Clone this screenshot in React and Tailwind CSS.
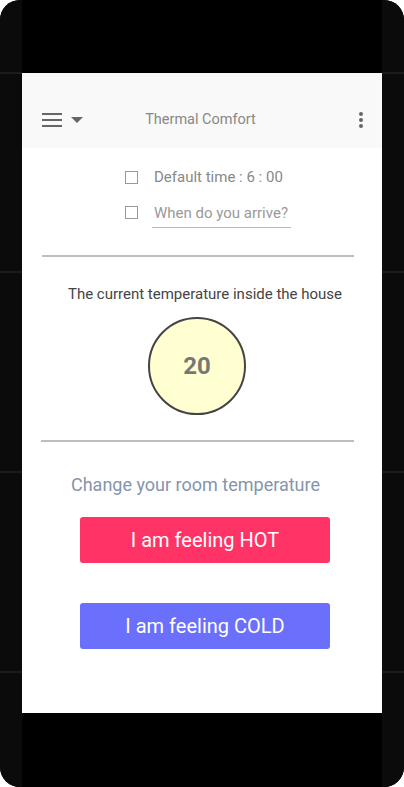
import React from 'react';

function SideRail() {
  // phone bezel column with faint seams
  return (
    <div className="w-[22px] flex flex-col bg-[#0b0b0b]">
      <div className="h-[72px]" />
      <div className="h-[2px] bg-[#1b1b1b]" />
      <div className="h-[197px]" />
      <div className="h-[2px] bg-[#1b1b1b]" />
      <div className="h-[198px]" />
      <div className="h-[2px] bg-[#1b1b1b]" />
      <div className="h-[198px]" />
      <div className="h-[2px] bg-[#1b1b1b]" />
      <div className="flex-1" />
    </div>
  );
}

export default function App() {
  return (
    <div className="w-[404px] h-[787px] bg-white font-['Roboto',sans-serif]">
      <div className="w-[404px] h-[787px] rounded-[20px] overflow-hidden flex bg-black">
        <SideRail />

        <div className="w-[360px] flex flex-col">
          <div className="h-[73px] bg-black" />

          <div className="h-[640px] bg-white flex flex-col">
            {/* Header */}
            <div className="h-[75px] bg-[#f9f9f9] flex items-center pl-[20px] pr-[19px] pt-[18px]">
              <div className="flex items-center gap-[9px] w-[62px]">
                <div className="flex flex-col gap-[4px] w-[20px]">
                  <div className="h-[2px] bg-[#666]" />
                  <div className="h-[2px] bg-[#666]" />
                  <div className="h-[2px] bg-[#666]" />
                </div>
                <svg width="12" height="6" viewBox="0 0 12 6">
                  <path d="M0 0h12L6 6z" fill="#666" />
                </svg>
              </div>
              <div className="flex-1 text-center text-[14.5px] text-[#888] pr-[62px]">Thermal Comfort</div>
              <div className="flex flex-col gap-[2px] items-center w-[4px]">
                <div className="w-[4px] h-[4px] rounded-full bg-[#666]" />
                <div className="w-[4px] h-[4px] rounded-full bg-[#666]" />
                <div className="w-[4px] h-[4px] rounded-full bg-[#666]" />
              </div>
            </div>

            <div className="w-[352px] flex flex-col">
              {/* Time options */}
              <div className="flex flex-col items-center pt-[20px] pl-[20px]">
                <div className="flex items-center w-[166px] h-[18px]">
                  <div className="w-[13px] h-[13px] border border-[#999] bg-white" />
                  <span className="ml-[16px] text-[15px] text-[#888]">Default time : 6 : 00</span>
                </div>
                <div className="flex items-center w-[166px] mt-[16px]">
                  <div className="w-[13px] h-[13px] border border-[#999] bg-white -mt-[4px]" />
                  <div className="ml-[14px] w-[139px] border-b border-[#bbb] pb-[2px] pl-[2px] text-[15px] text-[#999] whitespace-nowrap">
                    When do you arrive?
                  </div>
                </div>
              </div>

              <div className="mx-[20px] mt-[27px] h-[2px] bg-[#bdbdbd]" />

              {/* Current temperature */}
              <div className="text-center text-[15px] leading-[20px] text-[#444] mt-[27px] pl-[14px]">
                The current temperature inside the house
              </div>
              <div className="flex justify-center mt-[13px]">
                <div className="w-[98px] h-[98px] rounded-full border-2 border-[#444] bg-[#ffffd2] flex items-center justify-center -ml-[2px]">
                  <span className="text-[24px] font-bold text-[#777]">20</span>
                </div>
              </div>

              <div className="ml-[19px] mr-[20px] mt-[25px] h-[2px] bg-[#bdbdbd]" />

              {/* Controls */}
              <div className="text-center text-[18px] text-[#8595ad] mt-[29px] -ml-[5px]">
                Change your room temperature
              </div>
              <div className="flex flex-col items-center mt-[19px] gap-[40px] pl-[14px]">
                <button className="w-[250px] h-[46px] rounded-[3px] bg-[#ff3366] text-white text-[20px]">
                  I am feeling HOT
                </button>
                <button className="w-[250px] h-[46px] rounded-[3px] bg-[#6a70fb] text-white text-[20px]">
                  I am feeling COLD
                </button>
              </div>
            </div>
          </div>

          <div className="flex-1 bg-black" />
        </div>

        <SideRail />
      </div>
    </div>
  );
}
